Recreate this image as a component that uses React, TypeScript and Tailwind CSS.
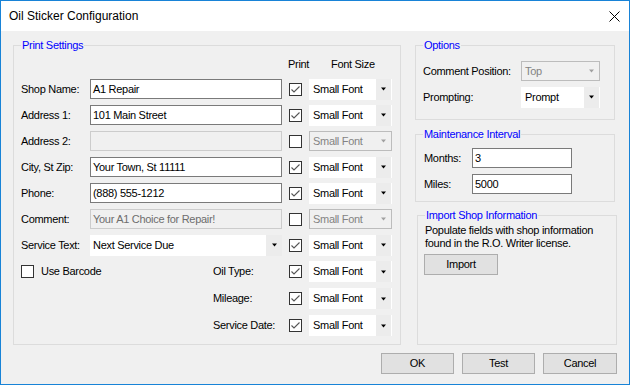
import React from "react";

const FONT = "font-['Liberation_Sans',Arial,sans-serif]";

function CheckBox({ checked }: { checked?: boolean }) {
  return (
    <span className="w-[13px] h-[13px] border border-[#333333] bg-white flex items-center justify-center shrink-0">
      {checked && (
        <svg width="11" height="11" viewBox="0 0 11 11">
          <path d="M1.5 5.5 L4 8 L9.5 2.5" fill="none" stroke="#555555" strokeWidth="1.1" />
        </svg>
      )}
    </span>
  );
}

function Arrow({ disabled }: { disabled?: boolean }) {
  return (
    <svg width="7" height="4" viewBox="0 0 7 4">
      <polygon points="1,0.5 6,0.5 3.5,3.5" fill={disabled ? "#a0a0a0" : "#000000"} />
    </svg>
  );
}

function Combo({ value, disabled, width }: { value: string; disabled?: boolean; width: string }) {
  if (disabled) {
    return (
      <div className={`${width} h-[20px] border border-[#bcbcbc] bg-[#f0f0f0] flex items-center shrink-0`}>
        <span className="flex-1 pl-[3px] text-[#838383] whitespace-nowrap">{value}</span>
        <span className="w-[15px] flex justify-center">
          <Arrow disabled />
        </span>
      </div>
    );
  }
  return (
    <div className={`${width} h-[21px] bg-white flex items-stretch shrink-0`}>
      <span className="flex-1 pl-[4px] flex items-center whitespace-nowrap">{value}</span>
      <span className="w-[15px] mr-[1px] bg-[#ececec] flex items-center justify-center">
        <Arrow />
      </span>
    </div>
  );
}

function TextBox({ value, disabled, width }: { value?: string; disabled?: boolean; width: string }) {
  return (
    <div
      className={`${width} h-[20px] border flex items-center pl-[2px] shrink-0 whitespace-nowrap ${
        disabled ? "border-[#cccccc] bg-[#f0f0f0] text-[#6d6d6d]" : "border-[#7a7a7a] bg-white"
      }`}
    >
      {value}
    </div>
  );
}

function GroupBox({ title, className, children }: { title: string; className: string; children?: React.ReactNode }) {
  return (
    <div className={`relative border border-[#dcdcdc] ${className}`}>
      <span className="absolute -top-[7px] left-[7px] px-[1px] bg-[#f0f0f0] text-[#0000ff] leading-[13px] whitespace-nowrap">
        {title}
      </span>
      {children}
    </div>
  );
}

function Button({ label, className = "" }: { label: string; className?: string }) {
  return (
    <div className={`h-[21px] bg-[#e1e1e1] border border-[#adadad] flex items-center justify-center ${className}`}>
      {label}
    </div>
  );
}

const fieldRows = [
  { label: "Shop Name:", value: "A1 Repair", print: true, font: "Small Font" },
  { label: "Address 1:", value: "101 Main Street", print: true, font: "Small Font" },
  { label: "Address 2:", value: "", print: false, font: "Small Font", disabled: true },
  { label: "City, St Zip:", value: "Your Town, St 11111", print: true, font: "Small Font" },
  { label: "Phone:", value: "(888) 555-1212", print: true, font: "Small Font" },
  { label: "Comment:", value: "Your A1 Choice for Repair!", print: false, font: "Small Font", disabled: true },
];

export default function App() {
  return (
    <div
      className={`w-[630px] h-[385px] border border-[#1883d7] bg-[#f0f0f0] flex flex-col text-[11px] leading-[13px] tracking-[-0.3px] text-black ${FONT}`}
    >
      {/* title bar */}
      <div className="h-[30px] bg-white flex items-center justify-between shrink-0">
        <span className="pl-[8px] text-[12px] tracking-normal">Oil Sticker Configuration</span>
        <svg width="11" height="11" viewBox="0 0 11 11" className="mr-[9px]">
          <path d="M0.5 0.5 L10.5 10.5 M10.5 0.5 L0.5 10.5" stroke="#000" strokeWidth="1" />
        </svg>
      </div>

      <div className="flex mt-[14px] ml-[12px]">
        {/* Print Settings */}
        <GroupBox title="Print Settings" className="w-[388px] h-[300px]">
          <div className="mt-[12px] flex pl-[274px]">
            <span className="w-[43px]">Print</span>
            <span>Font Size</span>
          </div>
          <div className="mt-[5px] flex flex-col">
            {fieldRows.map((r) => (
              <div key={r.label} className="h-[26px] flex items-center pl-[7px]">
                <span className="w-[69px] whitespace-nowrap">{r.label}</span>
                <TextBox value={r.value} disabled={r.disabled} width="w-[192px]" />
                <span className="ml-[7px]">
                  <CheckBox checked={r.print} />
                </span>
                <span className="ml-[7px]">
                  <Combo value={r.font} disabled={r.disabled} width="w-[83px]" />
                </span>
              </div>
            ))}
            <div className="h-[26px] flex items-center pl-[7px]">
              <span className="w-[69px] whitespace-nowrap">Service Text:</span>
              <div className="w-[192px] h-[21px] bg-white flex items-stretch">
                <span className="flex-1 pl-[3px] flex items-center">Next Service Due</span>
                <span className="w-[16px] bg-[#ececec] flex items-center justify-center">
                  <Arrow />
                </span>
              </div>
              <span className="ml-[7px]">
                <CheckBox checked />
              </span>
              <span className="ml-[7px]">
                <Combo value="Small Font" width="w-[83px]" />
              </span>
            </div>
            {["Oil Type:", "Mileage:", "Service Date:"].map((l, i) => (
              <div key={l} className="h-[27px] flex items-center pl-[7px]">
                <div className="w-[192px] flex items-center">
                  {i === 0 && (
                    <>
                      <CheckBox />
                      <span className="ml-[7px]">Use Barcode</span>
                    </>
                  )}
                </div>
                <span className="w-[76px] whitespace-nowrap">{l}</span>
                <CheckBox checked />
                <span className="ml-[7px]">
                  <Combo value="Small Font" width="w-[83px]" />
                </span>
              </div>
            ))}
          </div>
        </GroupBox>

        {/* right column */}
        <div className="ml-[14px] flex flex-col">
          <GroupBox title="Options" className="w-[200px] h-[75px]">
            <div className="mt-[12px]">
              <div className="h-[26px] flex items-center pl-[7px]">
                <span className="w-[98px] whitespace-nowrap">Comment Position:</span>
                <Combo value="Top" disabled width="w-[79px]" />
              </div>
              <div className="h-[26px] flex items-center pl-[7px]">
                <span className="w-[98px]">Prompting:</span>
                <Combo value="Prompt" width="w-[79px]" />
              </div>
            </div>
          </GroupBox>

          <GroupBox title="Maintenance Interval" className="w-[200px] h-[68px] mt-[14px]">
            <div className="mt-[10px]">
              <div className="h-[26px] flex items-center pl-[8px]">
                <span className="w-[48px]">Months:</span>
                <TextBox value="3" width="w-[100px]" />
              </div>
              <div className="h-[26px] flex items-center pl-[8px]">
                <span className="w-[48px]">Miles:</span>
                <TextBox value="5000" width="w-[100px]" />
              </div>
            </div>
          </GroupBox>

          <GroupBox title="Import Shop Information" className="w-[200px] h-[130px] mt-[13px] ml-[2px]">
            <p className="mt-[8px] ml-[7px]">
              Populate fields with shop information
              <br />
              found in the R.O. Writer license.
            </p>
            <Button label="Import" className="w-[74px] mt-[4px] ml-[6px]" />
          </GroupBox>
        </div>
      </div>

      <div className="flex justify-end gap-[8px] mt-[8px] mr-[12px]">
        <Button label="OK" className="w-[73px]" />
        <Button label="Test" className="w-[73px]" />
        <Button label="Cancel" className="w-[74px]" />
      </div>
    </div>
  );
}
